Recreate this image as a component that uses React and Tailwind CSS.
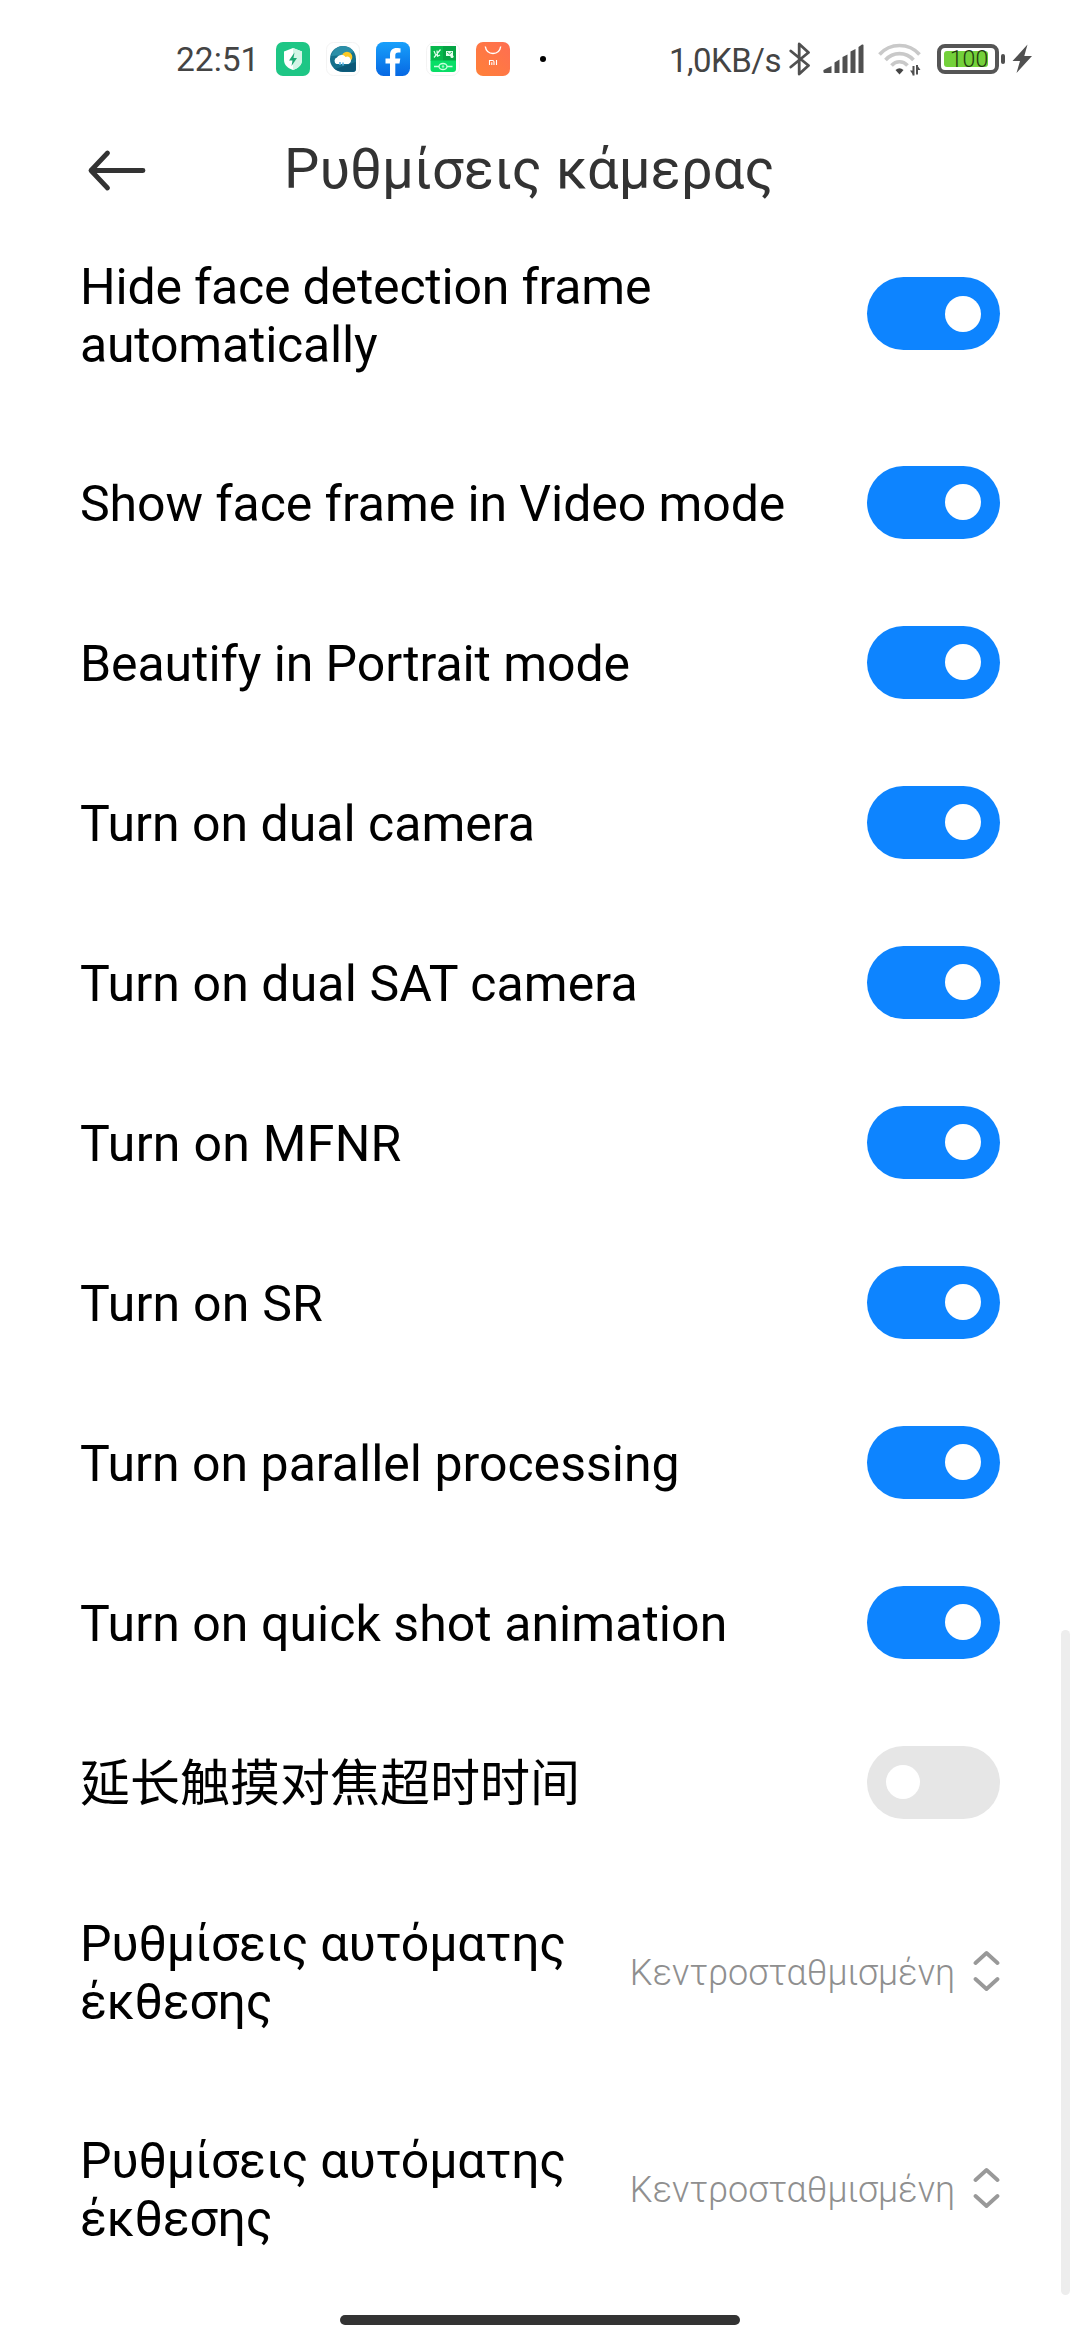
import React from "react";

const toggles = [
  { label: "Show face frame in Video mode", on: true, tracking: "tracking-[-0.08px]" },
  { label: "Beautify in Portrait mode", on: true, tracking: "tracking-[-0.08px]" },
  { label: "Turn on dual camera", on: true, tracking: "tracking-normal" },
  { label: "Turn on dual SAT camera", on: true, tracking: "tracking-[0.1px]" },
  { label: "Turn on MFNR", on: true, tracking: "tracking-[0.28px]" },
  { label: "Turn on SR", on: true, tracking: "tracking-[0.2px]" },
  { label: "Turn on parallel processing", on: true, tracking: "tracking-normal" },
  { label: "Turn on quick shot animation", on: true, tracking: "tracking-[0.05px]" },
  { label: "延长触摸对焦超时时间", on: false, tracking: "tracking-normal" },
];

function SecurityIcon() {
  return (
    <svg className="size-[34px]" viewBox="0 0 34 34">
      <rect width="34" height="34" rx="7" fill="#1ec685" />
      <path d="M17 6 L26 9.500 V18 C26 23 22 26.500 17 28 C12 26.500 8 23 8 18 V9.500 Z" fill="#fff" />
      <path d="M17 6 L26 9.500 V18 C26 23 22 26.500 17 28 Z" fill="#d3f5e6" />
      <path d="M18.500 10.500 L13 18.500 H16.500 L15.500 24 L21 16 H17.500 Z" fill="#1aa872" />
    </svg>
  );
}

function WeatherIcon() {
  return (
    <svg className="size-[34px]" viewBox="0 0 34 34">
      <rect x="0.500" y="0.500" width="33" height="33" rx="7" fill="#fff" stroke="#f3f3f3" />
      <path d="M17 4 A13 13 0 0 1 30 17 V27 Q30 30 27 30 H17 A13 13 0 0 1 17 4 Z" fill="#15708c" />
      <path d="M17 4 A13 13 0 0 1 28 10 L18 13 L5 14 A13 13 0 0 1 17 4 Z" fill="#2b8fa8" />
      <path d="M9 27 L29.800 20 V27 Q29.800 29.800 27 29.800 H17 Q12 29.500 9 27 Z" fill="#0c5878" />
      <circle cx="21" cy="15" r="5.300" fill="#fbc926" />
      <path d="M10.500 22 a3.500 3.500 0 0 1 0.500 -6.500 a5 5 0 0 1 8.500 -0.500 a3.600 3.600 0 0 1 3 7 Z" fill="#fff" />
      <path d="M14 20 V23 M17 20.500 V23.500" fill="none" stroke="#5db4e6" strokeWidth="1.600" />
    </svg>
  );
}

function FacebookIcon() {
  return (
    <svg className="size-[34px]" viewBox="0 0 34 34">
      <defs>
        <linearGradient id="fb" x1="0" y1="0" x2="0" y2="1">
          <stop offset="0" stopColor="#18a0fb" />
          <stop offset="1" stopColor="#0768e3" />
        </linearGradient>
      </defs>
      <rect width="34" height="34" rx="7.500" fill="url(#fb)" />
      <path d="M14 34 V21.500 H9.500 V16.500 H14 V13 C14 8.500 16.500 6 20.700 6 C22.500 6 24.500 6.300 24.500 6.300 V10.500 H22.200 C20 10.500 19.300 11.900 19.300 13.300 V16.500 H24.300 L23.500 21.500 H19.300 V34 Z" fill="#fff" />
    </svg>
  );
}

function GreenAppIcon() {
  return (
    <svg className="size-[34px]" viewBox="0 0 34 34">
      <rect x="0.500" y="0.500" width="33" height="33" rx="8" fill="#fff" stroke="#f3f3f3" />
      <path d="M4.500 4 H17 V19 H4.500 Z" fill="#06b84c" />
      <path d="M17 4 H30 V19 H17 Z" fill="#05a444" />
      <path d="M4.500 18.500 H30 V27 Q30 30 27 30 H7.500 Q4.500 30 4.500 27 Z" fill="#08de66" />
      <path d="M8 15.500 L14.500 7.500 M8 9 l1.500 3.500 M11 8.500 l0.500 5.500 M11 14.500 l3 -1.500" stroke="#e4ffee" strokeWidth="1.200" fill="none" />
      <rect x="20" y="9" width="7" height="5" fill="#e4ffee" />
      <path d="M21 10 l2.500 2 l2.500 -2" stroke="#05a444" strokeWidth="0.800" fill="none" />
      <circle cx="26" cy="14.500" r="1.600" fill="#e4ffee" />
      <path d="M8 24.500 H13 M21 24.500 H26.500" stroke="#c8ffdd" strokeWidth="1.400" />
      <ellipse cx="17" cy="24.500" rx="4" ry="3" fill="none" stroke="#c8ffdd" strokeWidth="1.300" />
      <circle cx="17" cy="24.500" r="1.200" fill="#9bf5bf" />
    </svg>
  );
}

function MiStoreIcon() {
  return (
    <svg className="size-[34px]" viewBox="0 0 34 34">
      <defs>
        <linearGradient id="mi" x1="0" y1="1" x2="1" y2="0">
          <stop offset="0" stopColor="#ff8038" />
          <stop offset="1" stopColor="#ff6e52" />
        </linearGradient>
      </defs>
      <rect width="34" height="34" rx="7" fill="url(#mi)" />
      <path d="M9.300 4.500 C10 9 13 11.500 17 11.500 C21 11.500 24 9 24.700 4.500" fill="none" stroke="#fff" strokeWidth="1.400" />
      <path d="M13.500 23 V18.500 H16.500 Q18 18.500 18 20 V23 M15.800 20.300 V23 M20.500 18 V23" fill="none" stroke="#fff" strokeWidth="1.100" />
    </svg>
  );
}

function BluetoothIcon() {
  return (
    <svg className="h-[34px] w-[22px]" viewBox="0 0 22 34">
      <path d="M1.800 9 L19.500 23.500 L10.200 32 V2 L19.500 10.500 L1.800 25" fill="none" stroke="#505050" strokeWidth="2.800" strokeLinejoin="round" strokeLinecap="round" />
    </svg>
  );
}

function SignalIcon() {
  return (
    <svg className="h-[30px] w-[41px]" viewBox="0 0 41 30" fill="#505050">
      <path d="M0.500 26 Q5 23.500 8.500 22 V29 H1.500 Q0 29 0.500 26 Z" />
      <path d="M11.500 18.500 L16.500 15.500 V29 H11.500 Z" />
      <path d="M19.500 13 L24.500 10.500 V29 H19.500 Z" />
      <path d="M27.500 7.500 L32.500 5 V29 H27.500 Z" />
      <path d="M35.500 3 L39 0.500 Q40.500 0 40.500 1.500 V29 H35.500 Z" />
    </svg>
  );
}

function WifiIcon() {
  return (
    <svg className="h-[34px] w-[44px]" viewBox="0 0 44 34">
      <g fill="none" stroke="#c9c9c9" strokeWidth="3.600">
        <path d="M1.500 12.500 C12 0.500 31 0.500 41.500 12.500" />
        <path d="M7.500 18 C15 9.500 28 9.500 35.500 18" />
        <path d="M13.500 23.500 C18 18.500 25 18.500 29.500 23.500" />
      </g>
      <path d="M17.500 28 Q21.500 24.500 25.500 28 L21.500 32.500 Z" fill="#444" />
      <path d="M35.500 24 V33.500 M39 23 V32.500" stroke="#505050" strokeWidth="2" />
      <path d="M32 28.500 H35.500 V33.500 Z M42.500 28 H39 V23 Z" fill="#505050" />
    </svg>
  );
}

function BoltIcon() {
  return (
    <svg className="h-[30px] w-[21px]" viewBox="0 0 21 30">
      <path d="M15.500 0.500 L0.500 17 H8 L4.500 29 L20 12 H12.300 Z" fill="#505050" />
    </svg>
  );
}

function Battery() {
  return (
    <div className="flex items-center gap-[2px]">
      <div className="h-[30px] w-[62px] rounded-[8px] border-4 border-[#555555] p-[3px]">
        <div className="flex h-full w-[44px] items-center justify-center rounded-[3px] bg-[#74d13b] pl-[6px]">
          <span className="text-[23px] leading-none font-light text-[#1f3a10]">100</span>
        </div>
      </div>
      <div className="h-[10px] w-1 rounded-[2px] bg-[#505050]" />
    </div>
  );
}

function StatusBar() {
  return (
    <div className="flex h-[118px] items-center pl-[176px] text-[33.500px] leading-none text-[#444444]">
      <span className="w-[100px] pt-[2px]">22:51</span>
      <div className="flex gap-4">
        <SecurityIcon />
        <WeatherIcon />
        <FacebookIcon />
        <GreenAppIcon />
        <MiStoreIcon />
      </div>
      <div className="ml-[30px] size-[6px] rounded-full bg-black" />
      <div className="ml-auto flex items-center pr-[47px]">
        <span className="pt-[2px] text-[33px] tracking-[-0.500px]">1,0KB/s</span>
        <div className="ml-[8px]"><BluetoothIcon /></div>
        <div className="ml-[12px]"><SignalIcon /></div>
        <div className="ml-[14px]"><WifiIcon /></div>
        <div className="ml-[15px]"><Battery /></div>
        <div className="ml-[7px]"><BoltIcon /></div>
      </div>
    </div>
  );
}

function Switch({ on }) {
  return (
    <div
      className={
        on
          ? "flex h-[73px] w-[133px] shrink-0 items-center justify-end rounded-full bg-[#0d84ff] pr-[19px]"
          : "flex h-[73px] w-[133px] shrink-0 items-center rounded-full bg-[#e6e6e6] pl-[19px]"
      }
    >
      <div className={on ? "size-9 rounded-full bg-white" : "size-[34px] rounded-full bg-white"} />
    </div>
  );
}

function Label({ children, tracking }) {
  return (
    <div className={tracking}>
      <div className="pt-1 text-[50px] leading-[58px] text-black">{children}</div>
    </div>
  );
}

function UpDown() {
  return (
    <svg className="h-[42px] w-[27px]" viewBox="0 0 27 42">
      <path d="M2.500 13 L13.500 3 L24.500 13 M2.500 29 L13.500 39 L24.500 29" fill="none" stroke="#999" strokeWidth="3.800" strokeLinecap="round" strokeLinejoin="round" />
    </svg>
  );
}

function SelectRow() {
  return (
    <div className="flex h-[217px] items-center justify-between">
      <Label tracking="tracking-[-0.200px]">
        Ρυθμίσεις αυτόματης
        <br />
        έκθεσης
      </Label>
      <div className="flex items-center gap-[18px]">
        <span className="pt-1 text-[36px] leading-[42px] font-light text-[#8f8f8f]">Κεντροσταθμισμένη</span>
        <UpDown />
      </div>
    </div>
  );
}

export default function App() {
  return (
    <div className="relative flex h-[2340px] w-[1080px] flex-col overflow-hidden bg-white font-['Roboto','Noto_Sans_CJK_SC',sans-serif]">
      <StatusBar />
      <header className="flex h-[87px] items-start pl-[87px]">
        <svg className="mt-[31px] h-[43px] w-[60px]" viewBox="0 0 60 43">
          <path d="M56 21.500 H4 M20.500 4 L4 21.500 L20.500 39" fill="none" stroke="#333" strokeWidth="4.800" strokeLinecap="round" strokeLinejoin="round" />
        </svg>
        <h1 className="mt-[18px] ml-[137px] text-[56px] leading-[66px] tracking-[0.050px] text-[#333333]">Ρυθμίσεις κάμερας</h1>
      </header>
      <main className="flex flex-col pr-[80px] pl-[80px]">
        <div className="flex h-[217px] items-center justify-between">
          <Label tracking="tracking-[-0.200px]">
            Hide face detection frame
            <br />
            automatically
          </Label>
          <Switch on />
        </div>
        {toggles.map((t) => (
          <div key={t.label} className="flex h-[160px] items-center justify-between">
            <Label tracking={t.tracking}>{t.label}</Label>
            <Switch on={t.on} />
          </div>
        ))}
        <SelectRow />
        <SelectRow />
      </main>
      <div className="mx-auto mt-[19px] h-[10px] w-[400px] rounded-full bg-[#333333]" />
      <div className="absolute top-[1630px] right-[10px] h-[665px] w-[9px] rounded-full bg-[#ededed]" />
    </div>
  );
}
